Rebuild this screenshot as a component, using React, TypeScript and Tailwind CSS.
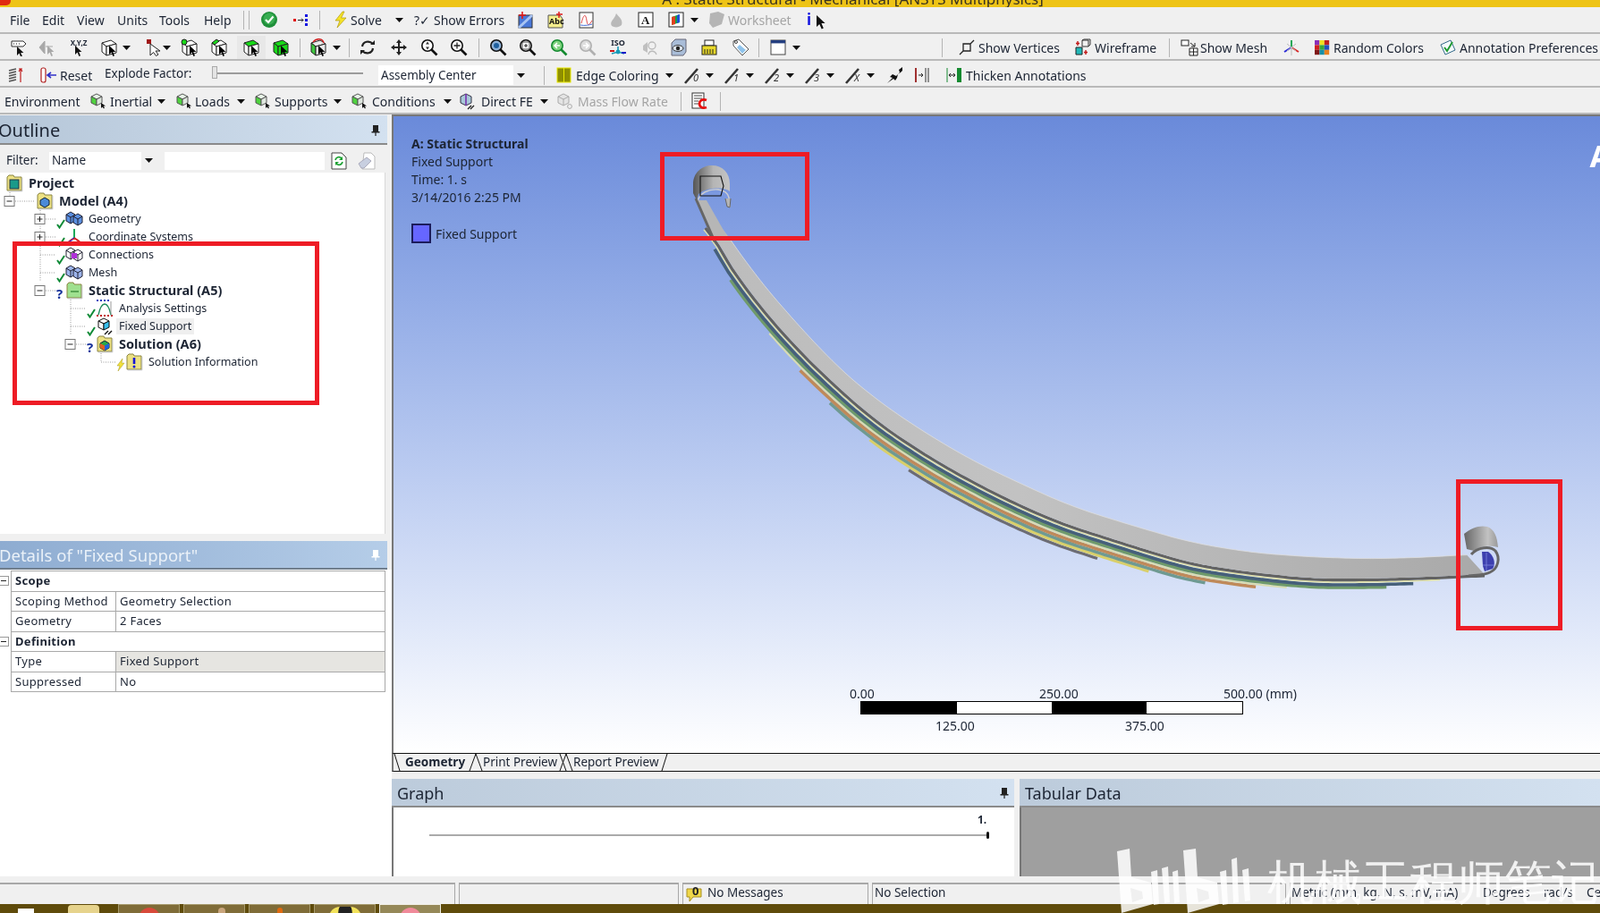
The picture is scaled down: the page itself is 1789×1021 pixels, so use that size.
import type { ReactNode } from 'react'

const cursor = 'M0 0V10L2.5 7.6 4.4 12 6 11.2 4.2 7H7.4Z'

function Svg({ children, className = '', w = 20 }: { children: ReactNode; className?: string; w?: number }) {
  return (
    <svg viewBox={`0 0 ${w} 20`} width={w} height={20} className={`shrink-0 ${className}`}>
      {children}
    </svg>
  )
}

function Arrow({ className = '' }: { className?: string }) {
  return (
    <svg viewBox="0 0 9 5" width={9} height={5} className={`shrink-0 ${className}`}>
      <path d="M0 0H9L4.5 5Z" fill="#111" />
    </svg>
  )
}

function Sep({ className = '' }: { className?: string }) {
  return <div className={`h-[21px] w-px shrink-0 bg-[#b4b4b4] ${className}`} />
}

function Label({ children, className = '' }: { children: ReactNode; className?: string }) {
  return <span className={`shrink-0 whitespace-nowrap ${className}`}>{children}</span>
}

// cube with a small cursor, the selection filter family
function CubeSel({ className = '', left = '#fff', top = '#fff', right = '#fff', mark }: { className?: string; left?: string; top?: string; right?: string; mark?: ReactNode }) {
  return (
    <Svg className={className}>
      <path d="M2 5 12 2 18 6 7 9Z" fill={top} stroke="#222" />
      <path d="M2 5 7 9V19L2 15Z" fill={left} stroke="#222" />
      <path d="M7 9 18 6V16L7 19Z" fill={right} stroke="#222" />
      {mark}
      <path d={cursor} transform="translate(10 8)" fill="#000" />
    </Svg>
  )
}

function Zoom({ className = '', color = '#111', lens = '#fff', children }: { className?: string; color?: string; lens?: string; children?: ReactNode }) {
  return (
    <Svg className={className}>
      <circle cx="8" cy="8" r="6.2" fill={lens} stroke={color} strokeWidth="1.6" />
      <path d="M12.5 12.5 18.5 18.5" stroke={color} strokeWidth="2.6" />
      {children}
    </Svg>
  )
}

function SmallCube({ className = '' }: { className?: string }) {
  return (
    <Svg className={className}>
      <path d="M3 5 9 2 15 5 9 8Z" fill="#e8f5e8" stroke="#555" />
      <path d="M3 5 9 8V15L3 12Z" fill="#4fd33f" stroke="#555" />
      <path d="M9 8 15 5V12L9 15Z" fill="#dfe7df" stroke="#555" />
      <path d="M14 12 19 15.5 16.6 15.8 18 17.6 17 18.4 15.5 16.4 14 18Z" fill="#111" />
    </Svg>
  )
}

function Edge({ className = '', n }: { className?: string; n: string }) {
  return (
    <span className={`relative flex h-5 w-5 shrink-0 ${className}`}>
      <svg viewBox="0 0 20 20" width={20} height={20}>
        <path d="M2 19 16 3" stroke="#333" strokeWidth="2.6" />
      </svg>
      <span className="absolute top-[6px] left-[11px] text-[11px] leading-[14px] text-[#333] italic">{n}</span>
    </span>
  )
}

function Folder({ fill = '#ece184', children }: { fill?: string; children?: ReactNode }) {
  return (
    <Svg>
      <path d="M2 3 4 1H9L10 3H18V18H2Z" fill={fill} stroke="#8a8440" />
      <path d="M18.8 4V18.8H3" fill="none" stroke="#bbb" />
      {children}
    </Svg>
  )
}

function Cubes({ fill, inner }: { fill: string; inner?: string }) {
  return (
    <Svg>
      <path d="M1 5 6 2 11 5V12L6 15 1 12Z" fill={fill} stroke="#223" />
      <path d="M1 5 6 8 11 5M6 8V15" fill="none" stroke="#223" />
      <path d="M9 7 14 4 19 7V14L14 17 9 14Z" fill={fill} stroke="#223" />
      <path d="M9 7 14 10 19 7M14 10V17" fill="none" stroke="#223" />
      {inner && <rect x="7" y="8" width="6" height="6" fill={inner} />}
    </Svg>
  )
}

function Check() {
  return (
    <svg viewBox="0 0 10 12" width={10} height={12} className="mt-[9px] shrink-0">
      <path d="M1 7 3.5 10.5 9 2" fill="none" stroke="#0f8a36" strokeWidth="2" />
    </svg>
  )
}

function Question() {
  return <span className="mt-[5px] w-[10px] shrink-0 text-[15px] leading-4 font-bold text-[#15309a]">?</span>
}

function Bolt() {
  return (
    <svg viewBox="0 0 10 14" width={10} height={14} className="mt-[6px] shrink-0">
      <path d="M7 0 1 8H4L2 14 9 5H6Z" fill="#f2e13a" stroke="#a79a20" strokeWidth=".5" />
    </svg>
  )
}

function TreeRow({ pad, mark, icon, label, bold, highlight }: { pad: string; mark?: ReactNode; icon: ReactNode; label: string; bold?: boolean; highlight?: boolean }) {
  return (
    <div className={`flex h-5 items-center ${pad}`}>
      {mark}
      {icon}
      <span className={`whitespace-nowrap ${bold ? 'text-[14.5px] font-bold' : 'text-[12.5px]'} ${highlight ? 'ml-[3px] bg-[#efefef] px-[3px]' : 'ml-[6px]'}`}>{label}</span>
    </div>
  )
}

function Pin({ color = '#222' }: { color?: string }) {
  return (
    <svg viewBox="0 0 10 12" width={10} height={12} className="shrink-0">
      <path d="M2 0H8V7H9.5V8.4H5.6V12H4.4V8.4H.5V7H2Z" fill={color} />
    </svg>
  )
}

function Expander({ x, y, open }: { x: number; y: number; open?: boolean }) {
  return (
    <g>
      <rect x={x} y={y - 5.5} width="11" height="11" fill="#fff" stroke="#777" />
      <path d={open ? `M${x + 2.5} ${y}h6` : `M${x + 2.5} ${y}h6M${x + 5.5} ${y - 3}v6`} stroke="#222" />
    </g>
  )
}

function TreeLines() {
  // y values are relative to the top of the tree panel
  return (
    <svg className="pointer-events-none absolute top-px left-0" width="240" height="240">
      <g stroke="#999" strokeDasharray="1 1.5" fill="none">
        <path d="M11 21V31M17 31H39M45 41V121M51 51H62M51 71H62M45 91H62M45 111H62M51 131H64M79 141V181M79 151H96M79 171H96M85 191H97M113 201V211H130" />
      </g>
      <Expander x={5} y={31} open />
      <Expander x={39} y={51} />
      <Expander x={39} y={71} />
      <Expander x={39} y={131} open />
      <Expander x={73} y={191} open />
    </svg>
  )
}

function DetailRow({ a, b, grey }: { a: string; b: string; grey?: boolean }) {
  return (
    <div className="flex h-[22.5px] border-b border-[#a9a9a9] pl-[4px]">
      <div className="flex w-[113px] items-center border-r border-[#a9a9a9]">{a}</div>
      <div className={`flex flex-1 items-center pl-[4px] ${grey ? 'bg-[#e6e5e1]' : ''}`}>{b}</div>
    </div>
  )
}

function DetailHead({ children }: { children: string }) {
  return (
    <div className="relative flex h-[22.5px] items-center border-b border-[#a9a9a9] pl-[4px] font-bold">
      <span className="absolute top-[5px] -left-[16px] flex h-[11px] w-[13px] items-center justify-center border border-[#999] bg-white">
        <span className="h-px w-[6px] bg-[#222]" />
      </span>
      {children}
    </div>
  )
}

type Pt = [number, number]

const lower: Pt[] = [
  [782, 228], [795, 262], [820, 302], [847, 338], [883, 380], [930, 427], [983, 473], [1050, 517], [1117, 553], [1183, 583], [1267, 610], [1333, 630], [1400, 640], [1467, 647], [1533, 647], [1600, 645], [1663, 642],
]
const upper: Pt[] = [
  [788, 225], [812, 262], [840, 302], [873, 342], [905, 377], [933, 407], [967, 437], [1017, 473], [1083, 513], [1150, 545], [1200, 567], [1267, 588], [1333, 607], [1400, 618], [1467, 623], [1533, 625], [1600, 623], [1643, 620],
]

function at(list: Pt[], x: number) {
  if (x <= list[0][0]) return list[0][1]
  for (let i = 1; i < list.length; i++) {
    if (x <= list[i][0]) {
      const [x0, y0] = list[i - 1]
      const [x1, y1] = list[i]
      return y0 + ((y1 - y0) * (x - x0)) / (x1 - x0)
    }
  }
  return list[list.length - 1][1]
}

const smooth = (list: Pt[], x: number) => (at(list, x - 24) + at(list, x - 12) + at(list, x) + at(list, x + 12) + at(list, x + 24)) / 5

// a leaf of the spring: the lower edge pushed out along its normal
function leaf(off: number, x0: number, x1: number, list = lower) {
  const out: string[] = []
  for (let x = x0; x <= x1; x += 5) {
    const s = (smooth(list, x + 4) - smooth(list, x - 4)) / 8
    const n = Math.sqrt(1 + s * s)
    out.push(`${(x - (s / n) * off).toFixed(1)},${(smooth(list, x) + off / n).toFixed(1)}`)
  }
  return out.join(' ')
}

function Spring() {
  const band = leaf(0, 800, 1643, upper) + ' ' + leaf(0, 790, 1663).split(' ').reverse().join(' ')
  return (
    <svg className="absolute top-0 left-0" width="1789" height="1021" viewBox="0 0 1789 1021">
      <defs>
        <linearGradient id="coilA" x1="0" x2="1" y1="0" y2="0">
          <stop offset="0" stopColor="#555" />
          <stop offset=".55" stopColor="#b5b5b5" />
          <stop offset="1" stopColor="#c4c4c4" />
        </linearGradient>
        <linearGradient id="coilB" x1="0" x2="1" y1="0" y2="0">
          <stop offset="0" stopColor="#666" />
          <stop offset=".7" stopColor="#c2c2c2" />
          <stop offset="1" stopColor="#999" />
        </linearGradient>
        <linearGradient id="bandFill" x1="0" x2="1" y1="0" y2="0">
          <stop offset="0" stopColor="#bcbcbc" />
          <stop offset=".4" stopColor="#c2c2c2" />
          <stop offset="1" stopColor="#a9a9a9" />
        </linearGradient>
      </defs>
      <g fill="none" strokeLinejoin="round">
        <polyline points={leaf(26, 1030, 1238)} stroke="#6c6c74" strokeWidth="3.2" />
        <polyline points={leaf(22.5, 986, 1292)} stroke="#d9cf6a" strokeWidth="3.4" />
        <polyline points={leaf(19.5, 941, 1355)} stroke="#6f9a92" strokeWidth="3.6" />
        <polyline points={leaf(16, 906, 1410)} stroke="#bf8a5a" strokeWidth="3.6" />
        <polyline points={leaf(13, 870, 1440)} stroke="#d8dcb0" strokeWidth="2" />
        <polyline points={leaf(10, 825, 1550)} stroke="#6f9a6a" strokeWidth="3.6" />
        <polyline points={leaf(7, 805, 1582)} stroke="#46607a" strokeWidth="3.6" />
        <polyline points={leaf(4, 790, 1610)} stroke="#dfe0a8" strokeWidth="1.6" />
        <polyline points={leaf(1.6, 790, 1663)} stroke="#626262" strokeWidth="3.2" />
      </g>
      <polygon points={band} fill="url(#bandFill)" />
      <polygon points="780,224 790,224 815,268 799,268" fill="#b6b6b6" />
      <polyline points={leaf(0, 815, 1643, upper)} fill="none" stroke="#dedede" strokeWidth=".8" />

      {/* top eye */}
      <path d="M775 206C775 193 785 185 796 185 808 185 816 193 816 206L816 214C811 209 790 209 781 217L779 224 775 216Z" fill="url(#coilA)" />
      <path d="M780 226C781 216 793 211 803 212 810 213 814 216 815 221L816 232" fill="none" stroke="#cfcfcf" strokeWidth="1.4" />
      <path d="M811 222 813 231 816 232 817 222" fill="#b5b5b5" stroke="#666" />
      <path d="M778 222 799 270" stroke="#666" strokeWidth="3" fill="none" />
      <path d="M783 197H806L809 208 806 219H783Z" fill="none" stroke="#111" strokeWidth="1.1" />

      {/* far eye */}
      <path d="M1637 597C1645 590 1655 587 1663 589 1671 592 1674 600 1675 612 1667 610 1655 610 1648 616L1640 614Z" fill="url(#coilB)" />
      <path d="M1645 620C1652 612 1666 610 1672 616 1678 624 1675 636 1666 640 1660 643 1652 643 1642 644" fill="none" stroke="#666" strokeWidth="3" />
      <path d="M1657 617 1664 617C1670 621 1673 630 1669 636L1660 639 1658 633Z" fill="#3c3fae" />
      <path d="M1662 618V638M1658 632H1671" stroke="#7d88e0" strokeWidth=".8" />
    </svg>
  )
}

function BiliLogo() {
  return (
    <svg viewBox="0 0 160 72" width={160} height={72} className="shrink-0">
      <g fill="#fff" fillOpacity=".85">
        <path d="M0 3 14 0 16 32 38 38 40 62 5 72ZM15 44 17 60 29 56 28 48Z" fillRule="evenodd" />
        <path d="M38 26 45 24 47 62 41 63ZM50 22 57 20 59 60 53 61ZM62 26 68 24 70 60 64 61Z" />
        <path d="M74 2 88 0 90 32 112 38 114 62 79 72ZM89 44 91 60 103 56 102 48Z" fillRule="evenodd" />
        <path d="M115 26 122 24 124 62 118 63ZM128 12 134 10 136 60 130 61ZM140 24 147 22 149 58 143 59Z" />
      </g>
    </svg>
  )
}

export default function App() {
  return (
    <div className="relative flex h-[1021px] w-[1789px] flex-col overflow-hidden bg-[#f0f0f0] font-['Noto_Sans',sans-serif] text-[14px] text-[#1c2433] blur-[0.45px]">
      {/* title bar, cut off by the capture */}
      <div className="relative flex h-[8px] shrink-0 justify-center overflow-hidden bg-[#eec417] pl-[118px]">
        <span className="absolute top-[-4px] left-[-4px] h-[10px] w-[16px] rounded-full bg-[#e02a12]" />
        <span className="-mt-[14px] text-[17px] whitespace-nowrap text-[#3a3320]">A : Static Structural - Mechanical [ANSYS Multiphysics]</span>
      </div>

      {/* menu + standard toolbar */}
      <div className="flex h-[30px] shrink-0 items-center border-b-2 border-[#b9b9b9] pl-[11px]">
        <Label className="w-[22px]">File</Label>
        <Label className="ml-[14px] w-[25px]">Edit</Label>
        <Label className="ml-[14px] w-[31px]">View</Label>
        <Label className="ml-[14px] w-[34px]">Units</Label>
        <Label className="ml-[13px] w-[36px]">Tools</Label>
        <Label className="ml-[14px] w-[31px]">Help</Label>
        <Sep className="ml-[13px]" />
        <Sep className="ml-[5px]" />
        <Svg className="ml-[12px]">
          <circle cx="10" cy="10" r="9" fill="#1f8f3a" />
          <circle cx="10" cy="9" r="6.5" fill="#38ad52" />
          <path d="M6 10 9 13 14.5 6.5" fill="none" stroke="#fff" strokeWidth="2.2" />
        </Svg>
        <Svg className="ml-[16px]">
          <rect x="1" y="9" width="3" height="3" fill="#e01010" />
          <path d="M6 10.5H12M10 8.5 12 10.5 10 12.5" fill="none" stroke="#222" />
          <path d="M14 4h3v3h-3zM14 9h3v3h-3zM14 14h3v3h-3z" fill="#1010e0" />
        </Svg>
        <Sep className="ml-[10px]" />
        <Svg className="ml-[13px]">
          <path d="M12 1 4 11H9L6 19 16 8H10.5L14 1Z" fill="#f5e327" stroke="#b09a10" strokeWidth=".7" />
        </Svg>
        <Label className="ml-[1px] w-[35px]">Solve</Label>
        <Arrow className="ml-[15px]" />
        <Label className="ml-[12px] w-[18px]">?✓</Label>
        <Label className="ml-[4px] w-[77px]">Show Errors</Label>
        <Svg className="ml-[15px]">
          <rect x="3" y="5" width="15" height="14" fill="#4a78d8" stroke="#333" />
          <path d="M3 19 18 5" stroke="#a9c4f2" strokeWidth="3" />
          <path d="M7 1V9M3 5H11" stroke="#e01818" strokeWidth="1.6" />
        </Svg>
        <Svg className="ml-[14px]">
          <path d="M2 5H15L18 9V19H2Z" fill="#f4ee8c" stroke="#555" />
          <text x="3" y="15" fontSize="9" fontWeight="700" fill="#111">Abc</text>
          <path d="M14 1V8M11 4H18" stroke="#e01818" strokeWidth="1.4" />
        </Svg>
        <Svg className="ml-[14px]">
          <rect x="3" y="2" width="15" height="17" fill="#fff" stroke="#333" />
          <path d="M5 14C8 2 10 4 11 11S14 16 17 11" fill="none" stroke="#e04848" />
          <path d="M4 16C9 17 14 16 17 15" fill="none" stroke="#4870d8" />
        </Svg>
        <Svg className="ml-[15px]">
          <path d="M4 17C1 12 7 10 9 3 12 7 17 10 15 16 12 19 7 19 4 17Z" fill="#b9b9b9" />
        </Svg>
        <Svg className="ml-[12px]">
          <rect x="2" y="2" width="16" height="16" fill="#fff" stroke="#222" />
          <text x="5" y="15" fontSize="13" fontWeight="700" fontFamily="Liberation Serif" fill="#111">A</text>
        </Svg>
        <Svg className="ml-[14px]">
          <rect x="2" y="2" width="16" height="16" fill="#fff" stroke="#222" />
          <path d="M5 7 14 4V13L5 16Z" fill="#18a048" />
          <path d="M5 7 9 6V15L5 16Z" fill="#e04020" />
          <path d="M11 5 14 4V13L11 14Z" fill="#2050d8" />
        </Svg>
        <Arrow className="ml-[6px]" />
        <Svg className="ml-[10px]">
          <path d="M3 3 12 1 19 4 16 15 6 19 2 14Z" fill="#b5b5b5" />
        </Svg>
        <Label className="ml-[3px] w-[71px] text-[#a5a5a5]">Worksheet</Label>
        <span className="ml-[17px] w-[8px] shrink-0 font-['Liberation_Serif',serif] text-[17px] leading-4 font-bold text-[#1414e0]">i</span>
        <Svg className="mt-[6px] ml-[2px]" w={12}>
          <path d={cursor} transform="translate(1 2) scale(1.3)" fill="#111" />
        </Svg>
      </div>

      {/* graphics toolbar */}
      <div className="flex h-[30px] shrink-0 items-center border-b-2 border-[#b9b9b9] pt-[2px] pl-[11px]">
        <Svg>
          <path d="M2 3H15L18 6 15 9H2Z" fill="#fff" stroke="#333" />
          <path d="M4 6h1M7 6h1M10 6h1" stroke="#111" />
          <path d={cursor} transform="translate(8 9)" fill="#111" />
        </Svg>
        <Svg className="ml-[11px]">
          <path d="M2 10 8 3V17ZM9 9H17" fill="#a8a8a8" stroke="#a8a8a8" />
          <path d={cursor} transform="translate(11 8)" fill="#a8a8a8" />
        </Svg>
        <span className="relative ml-[16px] flex h-5 w-5 shrink-0 justify-center">
          <span className="text-[8px] leading-[10px] font-bold whitespace-nowrap">X,Y,Z</span>
          <svg className="absolute top-[8px] left-[6px]" width="10" height="13"><path d={cursor} fill="#111" /></svg>
        </span>
        <CubeSel className="ml-[14px]" />
        <Arrow className="ml-[5px]" />
        <Svg className="ml-[16px]">
          <rect x="2" y="1" width="5" height="5" fill="#a01818" />
          <path d="M6 6V19L9.5 15.5 12.5 19.5 15 18 12 14H17Z" fill="#fff" stroke="#222" />
        </Svg>
        <Arrow className="ml-0" />
        <CubeSel className="ml-[11px]" mark={<circle cx="4" cy="4" r="3" fill="#18d818" stroke="#222" />} />
        <CubeSel className="ml-[13px]" mark={<path d="M2 5 7 1 10 3 5 7Z" fill="#18d818" stroke="#222" />} />
        <span className="ml-[10px] flex h-[26px] w-[32px] shrink-0 items-center justify-center bg-[#e8e8e8]">
          <CubeSel top="#18d818" />
        </span>
        <CubeSel className="ml-[7px]" top="#18d818" left="#18d818" right="#18d818" />
        <Sep className="ml-[11px]" />
        <CubeSel className="ml-[10px]" top="#e8e8e8" left="#3fc83f" right="#e8e8e8" mark={<path d="M4 4C8-1 15 0 16 5" fill="none" stroke="#d02020" strokeWidth="1.5" />} />
        <Arrow className="ml-[6px]" />
        <Sep className="ml-[9px]" />
        <Svg className="ml-[10px]">
          <path d="M4 9C5 3 12 2 16 6M16 11C15 17 8 18 4 14" fill="none" stroke="#222" strokeWidth="2.2" />
          <path d="M13 7H18V2ZM7 13H2V18Z" fill="#222" />
        </Svg>
        <Svg className="ml-[15px]">
          <path d="M10 1 13 5H11V9H15V7L19 10 15 13V11H11V15H13L10 19 7 15H9V11H5V13L1 10 5 7V9H9V5H7Z" fill="#222" />
        </Svg>
        <Zoom className="ml-[14px]"><path d="M8 3.5 10 6.5H6ZM8 12.5 6 9.5H10Z" fill="#333" /></Zoom>
        <Zoom className="ml-[13px]"><path d="M4.5 8H11.5M8 4.5V11.5" stroke="#222" strokeWidth="1.3" /></Zoom>
        <Sep className="ml-[12px]" />
        <Zoom className="ml-[11px]" lens="#8fb2d8"><circle cx="8" cy="8" r="3" fill="#1d5f9e" /></Zoom>
        <Zoom className="ml-[13px]"><path d="M4 4H12V12H4Z" fill="none" stroke="#444" /><path d="M6 8H10M8 6V10" stroke="#222" /></Zoom>
        <Zoom className="ml-[15px]" color="#148a30" lens="#7ed27e"><path d="M11 8H6M8 5 5 8 8 11" fill="none" stroke="#fff" strokeWidth="1.6" /></Zoom>
        <Zoom className="ml-[12px]" color="#b0b0b0" lens="#ddd"><path d="M5 8H10M8 5 11 8 8 11" fill="none" stroke="#fff" strokeWidth="1.6" /></Zoom>
        <span className="relative ml-[14px] flex h-5 w-5 shrink-0 justify-center">
          <span className="text-[9px] leading-[9px] font-bold">ISO</span>
          <svg className="absolute top-[8px] left-0" width="20" height="12">
            <path d="M10 1V8M3 9 10 7 17 9" stroke="#169ab8" strokeWidth="1.6" fill="none" />
            <circle cx="10" cy="7" r="2.4" fill="#169ab8" />
            <path d="M1 6H6" stroke="#d01818" strokeWidth="2" />
            <path d="M14 8H19" stroke="#1818c8" strokeWidth="2" />
          </svg>
        </span>
        <Svg className="ml-[15px]">
          <path d="M3 8 8 4V16L3 13Z" fill="#c0c0c0" />
          <circle cx="13" cy="8" r="4" fill="none" stroke="#bbb" strokeWidth="1.4" />
          <path d="M9 18C10 13 16 13 18 18" fill="none" stroke="#bbb" strokeWidth="1.4" />
        </Svg>
        <Svg className="ml-[13px]">
          <path d="M2 5 6 1H18V15L15 19H2Z" fill="#a9bdd8" stroke="#667" />
          <ellipse cx="9" cy="11" rx="6" ry="3.4" fill="#dde5ef" stroke="#333" />
          <circle cx="9" cy="11" r="2.2" fill="#222" />
        </Svg>
        <Svg className="ml-[14px]">
          <rect x="5" y="2" width="10" height="6" fill="#fff" stroke="#222" />
          <rect x="2" y="8" width="16" height="10" fill="#e8d82a" stroke="#222" />
          <path d="M5 12v5M8 12v5M11 12v5M14 12v5" stroke="#222" />
        </Svg>
        <Svg className="ml-[15px]">
          <path d="M2 3 8 1 19 12 12 19 2 8Z" fill="#fff" stroke="#555" />
          <path d="M9 7 16 13 12 17 6 10Z" fill="#8fc3ec" />
          <circle cx="5" cy="4" r="1.5" fill="#fff" stroke="#444" />
        </Svg>
        <Sep className="ml-[10px]" />
        <Svg className="ml-[11px]">
          <rect x="2" y="2" width="16" height="16" fill="#fff" stroke="#444" />
          <rect x="2" y="2" width="16" height="3.4" fill="#243f80" />
        </Svg>
        <Arrow className="ml-[6px]" />
        <Sep className="ml-[158px]" />
        <Svg className="ml-[17px]">
          <path d="M6 6H14V14H6ZM2 18 6 14M14 6 18 2" fill="none" stroke="#222" strokeWidth="1.3" />
        </Svg>
        <Label className="ml-[3px] w-[91px]">Show Vertices</Label>
        <Svg className="ml-[16px]">
          <path d="M9 2H16V9H9ZM9 2 11 1H18V7L16 9" fill="none" stroke="#333" />
          <path d="M2 10H9V18H2Z" fill="#21b8b8" stroke="#222" />
          <path d="M4 3V8M2 5.5H6M13 13V18M11 15.5H15" stroke="#c01818" strokeWidth="1.4" />
        </Svg>
        <Label className="ml-[3px] w-[69px]">Wireframe</Label>
        <Sep className="ml-[14px]" />
        <Svg className="ml-[12px]">
          <rect x="1" y="2" width="8" height="6" fill="#fff" stroke="#222" />
          <path d="M11 5 16 9M16 5V9H12" fill="none" stroke="#222" />
          <path d="M10 11H19V19H10ZM14.5 11V19M10 15H19" fill="#fff" stroke="#222" />
        </Svg>
        <Label className="ml-[2px] w-[76px]">Show Mesh</Label>
        <Svg className="ml-[16px]">
          <path d="M10 10V2" stroke="#18a858" strokeWidth="2" />
          <path d="M10 10 2 15" stroke="#2828d8" strokeWidth="2" />
          <path d="M10 10 18 15" stroke="#d82828" strokeWidth="2" />
          <path d="M5 6 15 14M15 6 5 14M10 10V19" stroke="#bbb" strokeWidth="1" />
        </Svg>
        <Svg className="ml-[14px]">
          <rect x="2" y="2" width="5.4" height="5.4" fill="#8a2fb8" />
          <rect x="7.4" y="2" width="5.4" height="5.4" fill="#f0e020" />
          <rect x="12.8" y="2" width="5.4" height="5.4" fill="#c02020" />
          <rect x="2" y="7.4" width="5.4" height="5.4" fill="#d02020" />
          <rect x="7.4" y="7.4" width="5.4" height="5.4" fill="#38a838" />
          <rect x="12.8" y="7.4" width="5.4" height="5.4" fill="#2050c0" />
          <rect x="2" y="12.8" width="5.4" height="5.4" fill="#801818" />
          <rect x="7.4" y="12.8" width="5.4" height="5.4" fill="#1890a8" />
          <rect x="12.8" y="12.8" width="5.4" height="5.4" fill="#e88020" />
        </Svg>
        <Label className="ml-[3px] w-[101px]">Random Colors</Label>
        <Svg className="ml-[17px]">
          <path d="M2 7 13 2 18 13 7 18Z" fill="#f4fafc" stroke="#336a8a" />
          <path d="M6 10 9 14 15 4" fill="none" stroke="#1f9a32" strokeWidth="2" />
        </Svg>
        <Label className="ml-[3px]">Annotation Preferences</Label>
      </div>

      {/* explode + edges toolbar */}
      <div className="flex h-[30px] shrink-0 items-center border-b-2 border-[#b9b9b9] pt-[4px] pl-[7px]">
        <Svg>
          <path d="M3 5 11 3M3 8 11 6M3 11 11 9M3 14 11 12M3 17 11 15" stroke="#555" strokeWidth="1.6" />
          <path d="M16 18V4M14 6 16 3 18 6M14 3H18" fill="none" stroke="#c02020" strokeWidth="1.2" />
        </Svg>
        <Svg className="ml-[18px]">
          <rect x="1" y="2" width="5" height="16" rx="2" fill="#fff" stroke="#b02020" strokeWidth="1.2" />
          <path d="M18 10H9M12 7 8 10 12 13" fill="none" stroke="#3030c8" strokeWidth="1.6" />
        </Svg>
        <Label className="ml-[2px] w-[34px]">Reset</Label>
        <Label className="ml-[16px] -mt-[4px] w-[97px] text-[13.5px]">Explode Factor:</Label>
        <div className="relative ml-[23px] h-[2px] w-[169px] shrink-0 -translate-y-[2px] bg-[#9b9b9b]">
          <span className="absolute -top-[7px] left-0 h-[14px] w-[6px] border border-[#aaa] bg-[#e4e4e4]" />
        </div>
        <div className="ml-[17px] flex h-[22px] w-[168px] shrink-0 items-center bg-white pl-[3px] text-[13.5px]">
          <span className="flex-1">Assembly Center</span>
          <span className="flex h-full w-[17px] items-center justify-center bg-[#f0f0f0]"><Arrow /></span>
        </div>
        <Sep className="ml-[17px]" />
        <Svg className="ml-[13px]" w={17}>
          <rect x="1" y="2" width="15" height="16" fill="#8f8f00" stroke="#e8e800" />
          <path d="M8.5 2V18" stroke="#e8e800" />
        </Svg>
        <Label className="ml-[5px] w-[92px]">Edge Coloring</Label>
        <Arrow className="ml-[8px]" />
        <Edge className="ml-[11px]" n="0" />
        <Arrow className="ml-[5px]" />
        <Edge className="ml-[11px]" n="1" />
        <Arrow className="ml-[5px]" />
        <Edge className="ml-[11px]" n="2" />
        <Arrow className="ml-[5px]" />
        <Edge className="ml-[11px]" n="3" />
        <Arrow className="ml-[5px]" />
        <Edge className="ml-[11px]" n="X" />
        <Arrow className="ml-[5px]" />
        <Svg className="ml-[12px]">
          <path d="M19 1 15 4 16 7 12 11 8 9 5 12 8 13 2 19 9 14 11 16 13 13 14 9 17 7 19 5Z" fill="#111" />
        </Svg>
        <Svg className="ml-[10px]">
          <path d="M4 2V18" stroke="#a03030" strokeWidth="2" />
          <path d="M7 10H12M10 8 12 10 10 12" fill="none" stroke="#222" />
          <path d="M15 2V18M18 2V18" stroke="#333" />
        </Svg>
        <Svg className="ml-[17px]">
          <path d="M2 2V18" stroke="#148a30" />
          <path d="M4 10H11M6 8 4 10 6 12M9 8 11 10 9 12" fill="none" stroke="#222" />
          <rect x="13" y="2" width="5" height="16" fill="#148a30" />
        </Svg>
        <Label className="ml-[3px]">Thicken Annotations</Label>
      </div>

      {/* environment toolbar */}
      <div className="flex h-[30px] shrink-0 items-center border-b-2 border-[#b9b9b9] pt-[2px] pl-[5px]">
        <Label className="w-[84px]">Environment</Label>
        <SmallCube className="ml-[10px]" />
        <Label className="ml-[4px] w-[45px]">Inertial</Label>
        <Arrow className="ml-[8px]" />
        <SmallCube className="ml-[10px]" />
        <Label className="ml-[3px] w-[38px]">Loads</Label>
        <Arrow className="ml-[9px]" />
        <SmallCube className="ml-[9px]" />
        <Label className="ml-[4px] w-[58px]">Supports</Label>
        <Arrow className="ml-[8px]" />
        <SmallCube className="ml-[9px]" />
        <Label className="ml-[5px] w-[72px]">Conditions</Label>
        <Arrow className="ml-[8px]" />
        <Svg className="ml-[7px]">
          <path d="M3 5 9 2 15 5V12L9 15 3 12Z" fill="#a8c8d8" stroke="#334" />
          <path d="M9 2V15" stroke="#7a30b0" strokeWidth="1.6" />
          <path d="M11 19 15 15M14 19 18 15" stroke="#222" strokeWidth="1.3" />
        </Svg>
        <Label className="ml-[6px] w-[59px]">Direct FE</Label>
        <Arrow className="ml-[7px]" />
        <Svg className="ml-[8px]">
          <path d="M3 5 9 2 15 5V12L9 15 3 12Z" fill="#e4e4e4" stroke="#aaa" />
          <path d="M3 5 9 8 15 5M9 8V15" fill="none" stroke="#aaa" />
          <circle cx="16" cy="16" r="2.4" fill="none" stroke="#aaa" />
        </Svg>
        <Label className="ml-[5px] w-[99px] text-[#a5a5a5]">Mass Flow Rate</Label>
        <Sep className="ml-[16px]" />
        <Svg className="ml-[10px]">
          <rect x="2" y="1" width="13" height="17" fill="#fff" stroke="#333" />
          <path d="M4 4H13M4 7H13M4 10H9M4 13H9" stroke="#444" />
          <path d="M18 9C13 7 10 10 10 13S13 19 18 17" fill="none" stroke="#e80c0c" strokeWidth="2.8" />
        </Svg>
        <Sep className="ml-[13px]" />
      </div>

      {/* main area */}
      <div className="flex h-[852px] shrink-0">
        <div className="flex w-[438px] shrink-0 flex-col pt-px">
          <div className="flex h-[33px] w-[433px] shrink-0 items-center justify-between border-b-2 border-[#8a8a8a] bg-gradient-to-r from-[#b5c6d8] to-[#d3e1f0] pt-[2px] pr-[8px]">
            <span className="-ml-[2px] text-[20px]">Outline</span>
            <Pin />
          </div>
          <div className="flex h-[31px] shrink-0 items-center pt-[4px] pl-[7px] text-[13.5px]">
            <span className="w-[48px]">Filter:</span>
            <div className="flex h-[20px] w-[119px] items-center bg-white pl-[3px]">
              <span className="flex-1">Name</span>
              <span className="flex h-full w-[16px] items-center justify-center bg-[#f0f0f0]"><Arrow /></span>
            </div>
            <div className="ml-[10px] h-[20px] w-[179px] bg-white" />
            <Svg className="ml-[7px]" w={18}>
              <path d="M1 1H12L17 6V19H1Z" fill="#fff" stroke="#444" />
              <path d="M5 9C6 5 10 5 12 7M13 11C12 15 8 15 6 13" fill="none" stroke="#18a030" strokeWidth="1.6" />
              <path d="M13 5V9H9ZM5 15V11H9Z" fill="#18a030" />
            </Svg>
            <Svg className="ml-[12px]">
              <path d="M7 1H15L19 5V19H5Z" fill="#fff" stroke="#bbb" />
              <path d="M1 13 10 6 15 10 7 18H4Z" fill="#c8cfe0" stroke="#aab" />
            </Svg>
          </div>
          <div className="relative h-[404px] w-[431px] shrink-0 border-r border-[#d8d8d8] bg-white pt-[2px] text-[#1c2433]">
            <TreeLines />
            <div className="relative">
              <TreeRow pad="pl-[6px]" bold label="Project" icon={<Folder><rect x="5" y="6" width="10" height="10" fill="#1b9a8a" stroke="#234" /></Folder>} />
              <TreeRow pad="pl-[40px]" bold label="Model (A4)" icon={<Folder><path d="M5 9 10 6 15 9V14L10 17 5 14Z" fill="#4a8ad8" stroke="#123" /></Folder>} />
              <TreeRow pad="pl-[63px]" mark={<Check />} label="Geometry" icon={<Cubes fill="#5b8fe0" />} />
              <TreeRow pad="pl-[63px]" mark={<Check />} label="Coordinate Systems" icon={
                <Svg>
                  <path d="M10 11V1" stroke="#18a858" strokeWidth="2" />
                  <path d="M10 11 2 17" stroke="#2828d8" strokeWidth="2" />
                  <path d="M10 11 18 17" stroke="#d82828" strokeWidth="2" />
                  <path d="M3 16C6 11 14 11 17 16" fill="none" stroke="#d82828" />
                </Svg>
              } />
              <TreeRow pad="pl-[63px]" mark={<Check />} label="Connections" icon={<Cubes fill="#fff" inner="#b030d8" />} />
              <TreeRow pad="pl-[63px]" mark={<Check />} label="Mesh" icon={<Cubes fill="#9db4ec" />} />
              <TreeRow pad="pl-[63px]" mark={<Question />} bold label="Static Structural (A5)" icon={<Folder fill="#9fe08f"><path d="M6 11H15" stroke="#3a8a3a" strokeWidth="1.4" /></Folder>} />
              <TreeRow pad="pl-[97px]" mark={<Check />} label="Analysis Settings" icon={
                <Svg>
                  <path d="M3 17C5 8 7 5 10 5S15 8 17 17" fill="none" stroke="#1a8a5a" strokeWidth="1.4" />
                  <path d="M1 18H19" stroke="#c02020" strokeDasharray="2 2" strokeWidth="2" />
                  <path d="M1 1H15" stroke="#2040c0" strokeDasharray="2 2" strokeWidth="2" />
                  <path d="M17 2V18" stroke="#999" />
                </Svg>
              } />
              <TreeRow pad="pl-[97px]" mark={<Check />} highlight label="Fixed Support" icon={
                <Svg>
                  <path d="M3 4 9 1 15 4 9 7Z" fill="#fff" stroke="#111" />
                  <path d="M3 4 9 7V14L3 11Z" fill="#fff" stroke="#111" />
                  <path d="M9 7 15 4V11L9 14Z" fill="#38c0f0" stroke="#111" />
                  <path d="M10 19 14 15M14 19 18 15" stroke="#111" strokeWidth="1.4" />
                </Svg>
              } />
              <TreeRow pad="pl-[97px]" mark={<Question />} bold label="Solution (A6)" icon={
                <Folder>
                  <path d="M5 9 10 6 15 9V14L10 17 5 14Z" fill="#28a848" stroke="#123" />
                  <path d="M5 9 10 11.5V17L5 14Z" fill="#e06020" />
                  <path d="M10 11.5 15 9V14L10 17Z" fill="#2060d8" />
                </Folder>
              } />
              <TreeRow pad="pl-[130px]" mark={<Bolt />} label="Solution Information" icon={
                <Folder><path d="M10 5V12" stroke="#1414d8" strokeWidth="2.6" /><circle cx="10" cy="15" r="1.5" fill="#1414d8" /></Folder>
              } />
            </div>
            <div className="pointer-events-none absolute top-[77px] left-[14px] h-[183px] w-[343px] border-[5px] border-[#ee1c25]" />
          </div>
          <div className="mt-[8px] flex h-[32px] w-[433px] shrink-0 items-center justify-between border-b-2 border-[#6f7d8c] bg-gradient-to-r from-[#8eacd1] to-[#b5cde8] pt-[2px] pr-[8px] text-[#eaf1f8]">
            <span className="-ml-[1px] text-[18.5px] whitespace-nowrap">Details of "Fixed Support"</span>
            <Pin color="#fff" />
          </div>
          <div className="flex-1 bg-white pt-px pr-[7px] pl-[12px] text-[13px] tracking-[0.3px]">
            <div className="w-[419px] border-t border-r border-l border-[#a9a9a9]">
              <DetailHead>Scope</DetailHead>
              <DetailRow a="Scoping Method" b="Geometry Selection" />
              <DetailRow a="Geometry" b="2 Faces" />
              <DetailHead>Definition</DetailHead>
              <DetailRow a="Type" b="Fixed Support" grey />
              <DetailRow a="Suppressed" b="No" />
            </div>
          </div>
        </div>

        <div className="flex min-w-0 flex-1 flex-col">
          <div className="relative h-[714px] shrink-0 overflow-hidden border-t-2 border-l-2 border-[#777] bg-gradient-to-b from-[#6a8ada] to-white pt-[21px] pl-[20px]">
            <p className="text-[14px] leading-5 font-bold">A: Static Structural</p>
            <p className="text-[14px] leading-5">Fixed Support</p>
            <p className="text-[14px] leading-5">Time: 1. s</p>
            <p className="text-[14px] leading-5">3/14/2016 2:25 PM</p>
            <div className="mt-[19px] flex items-center gap-[5px]">
              <span className="h-[22px] w-[22px] border-2 border-[#1c1c5c] bg-[#6666ff]" />
              <span>Fixed Support</span>
            </div>
            <span className="absolute top-[24px] right-[-12px] text-[34px] leading-10 font-bold text-white">A</span>
          </div>
          <div className="flex h-[21px] shrink-0 items-center border-y border-l-2 border-y-[#111] border-l-[#777] text-[13.5px] whitespace-nowrap">
            <svg width="8" height="19" className="shrink-0"><path d="M1 0 7 19" stroke="#111" /></svg>
            <span className="ml-[5px] w-[71px] font-bold">Geometry</span>
            <svg width="16" height="19" className="shrink-0"><path d="M1 19 8 0 15 19" fill="none" stroke="#111" /></svg>
            <span className="w-[85px]">Print Preview</span>
            <svg width="16" height="19" className="shrink-0"><path d="M1 0 8 19M1 19 8 0 15 19" fill="none" stroke="#111" /></svg>
            <span className="w-[98px]">Report Preview</span>
            <svg width="8" height="19" className="shrink-0"><path d="M1 19 7 0" stroke="#111" /></svg>
          </div>
          <div className="mt-[8px] flex min-h-0 flex-1 gap-[6px]">
            <div className="flex w-[696px] shrink-0 flex-col">
              <div className="flex h-[32px] shrink-0 items-center justify-between border-b-2 border-[#8a8a8a] bg-gradient-to-r from-[#bccbdb] to-[#d3e1f0] pt-[2px] pr-[6px] pl-[6px]">
                <span className="text-[18px]">Graph</span>
                <Pin />
              </div>
              <div className="relative flex-1 border-l-2 border-[#777] bg-white">
                <div className="absolute top-[30px] left-[40px] h-[2px] w-[624px] bg-[#aaa]" />
                <span className="absolute top-[27px] left-[663px] h-[8px] w-[3px] rounded-full bg-[#111]" />
                <span className="absolute top-[5px] left-[653px] text-[12px] font-bold">1.</span>
              </div>
            </div>
            <div className="flex min-w-0 flex-1 flex-col">
              <div className="flex h-[32px] shrink-0 items-center border-b-2 border-[#8a8a8a] bg-gradient-to-r from-[#bccbdb] to-[#d3e1f0] pt-[2px] pl-[6px]">
                <span className="text-[18px]">Tabular Data</span>
              </div>
              <div className="flex-1 border-l-2 border-[#777] bg-[#9f9f9f]" />
            </div>
          </div>
        </div>
      </div>

      {/* status bar */}
      <div className="mt-[7px] flex h-[24px] shrink-0 gap-[4px] pb-[3px] text-[13.5px]">
        <div className="-mb-[3px] w-[509px] shrink-0 border-t-2 border-r border-[#a8a8a8]" />
        <div className="-mb-[3px] w-[246px] shrink-0 border-t-2 border-r border-l border-[#a8a8a8]" />
        <div className="-mb-[3px] flex w-[208px] shrink-0 items-center border-t-2 border-r border-l border-[#a8a8a8] pb-[3px] pl-[3px]">
          <Svg>
            <path d="M1 5H17V14H8L4 19V14H1Z" fill="#f0d84a" stroke="#a89020" />
            <text x="7" y="12" fontSize="13" fontWeight="700" fill="#222">0</text>
          </Svg>
          <span className="ml-[4px]">No Messages</span>
        </div>
        <div className="-mb-[3px] flex w-[463px] shrink-0 items-center border-t-2 border-r border-l border-[#a8a8a8] pb-[3px] pl-[2px]">No Selection</div>
        <div className="-mb-[3px] flex min-w-0 flex-1 items-center overflow-hidden border-t-2 border-l border-[#a8a8a8] pb-[3px] pl-px whitespace-nowrap">
          <span className="w-[198px] shrink-0">Metric (mm, kg, N, s, mV, mA)</span>
          <span className="ml-[16px] w-[52px] shrink-0">Degrees</span>
          <span className="ml-[16px] w-[32px] shrink-0">rad/s</span>
          <span className="ml-[16px] shrink-0">Celsius</span>
        </div>
      </div>

      {/* taskbar, cut off by the capture */}
      <div className="flex h-[10px] shrink-0 items-start gap-[4px] overflow-hidden bg-[#5f4b0b] pl-[20px]">
        <span className="mt-[5px] h-[5px] w-[18px] shrink-0 bg-white" />
        <span className="mt-px ml-[34px] h-[9px] w-[35px] shrink-0 rounded-t-sm bg-[#e6d38c]" />
        <span className="ml-[17px] flex h-[10px] w-[69px] shrink-0 justify-center border-t border-r border-l border-[#a79b6d] bg-[#7f6c38] pt-[3px]"><span className="h-6 w-6 rounded-full bg-[#d84a3a]" /></span>
        <span className="flex h-[10px] w-[69px] shrink-0 justify-center border-t border-r border-l border-[#a79b6d] bg-[#7f6c38] pt-[3px]"><span className="ml-4 h-6 w-[8px] rounded-full bg-[#c9a57c]" /></span>
        <span className="flex h-[10px] w-[69px] shrink-0 justify-center border-t border-r border-l border-[#a79b6d] bg-[#7f6c38] pt-[3px]"><span className="h-6 w-[6px] rounded-full bg-[#e06a10]" /></span>
        <span className="flex h-[10px] w-[69px] shrink-0 justify-center border-t border-r border-l border-[#a79b6d] bg-[#7f6c38] pt-[2px]"><span className="h-6 w-9 rounded-full border-x-[10px] border-[#f2e25a] bg-[#222]" /></span>
        <span className="flex h-[10px] w-[69px] shrink-0 justify-center border-t border-r border-l border-[#f0efe5] bg-[#958858] pt-[3px]"><span className="h-6 w-6 rounded-full bg-[#f08a9a]" /></span>
      </div>

      <Spring />

      {/* red annotation frames drawn over the model */}
      <div className="absolute top-[170px] left-[738px] h-[99px] w-[167px] border-[5px] border-[#ee1c25]" />
      <div className="absolute top-[536px] left-[1628px] h-[169px] w-[119px] border-[5px] border-[#ee1c25]" />

      {/* scale bar */}
      <div className="absolute top-[766px] left-[950px] flex w-[510px] flex-col text-[14px]">
        <div className="flex h-[18px] items-center">
          <span className="w-[212px] pl-0">0.00</span>
          <span className="w-[206px]">250.00</span>
          <span>500.00 (mm)</span>
        </div>
        <div className="ml-[12px] flex h-[15px] w-[428px] border border-black">
          <span className="w-[107px] bg-black" />
          <span className="w-[106px] bg-white" />
          <span className="w-[106px] bg-black" />
          <span className="flex-1 bg-white" />
        </div>
        <div className="ml-[96px] flex h-[24px] items-center">
          <span className="w-[212px]">125.00</span>
          <span>375.00</span>
        </div>
      </div>

      {/* uploader watermark */}
      <div className="pointer-events-none absolute top-[949px] left-[1249px] flex items-start whitespace-nowrap">
        <BiliLogo />
        <span className="mt-[3px] ml-[8px] font-['Noto_Sans_CJK_SC',sans-serif] text-[53px] leading-[66px] text-white/85">机械工程师笔记</span>
      </div>
    </div>
  )
}
